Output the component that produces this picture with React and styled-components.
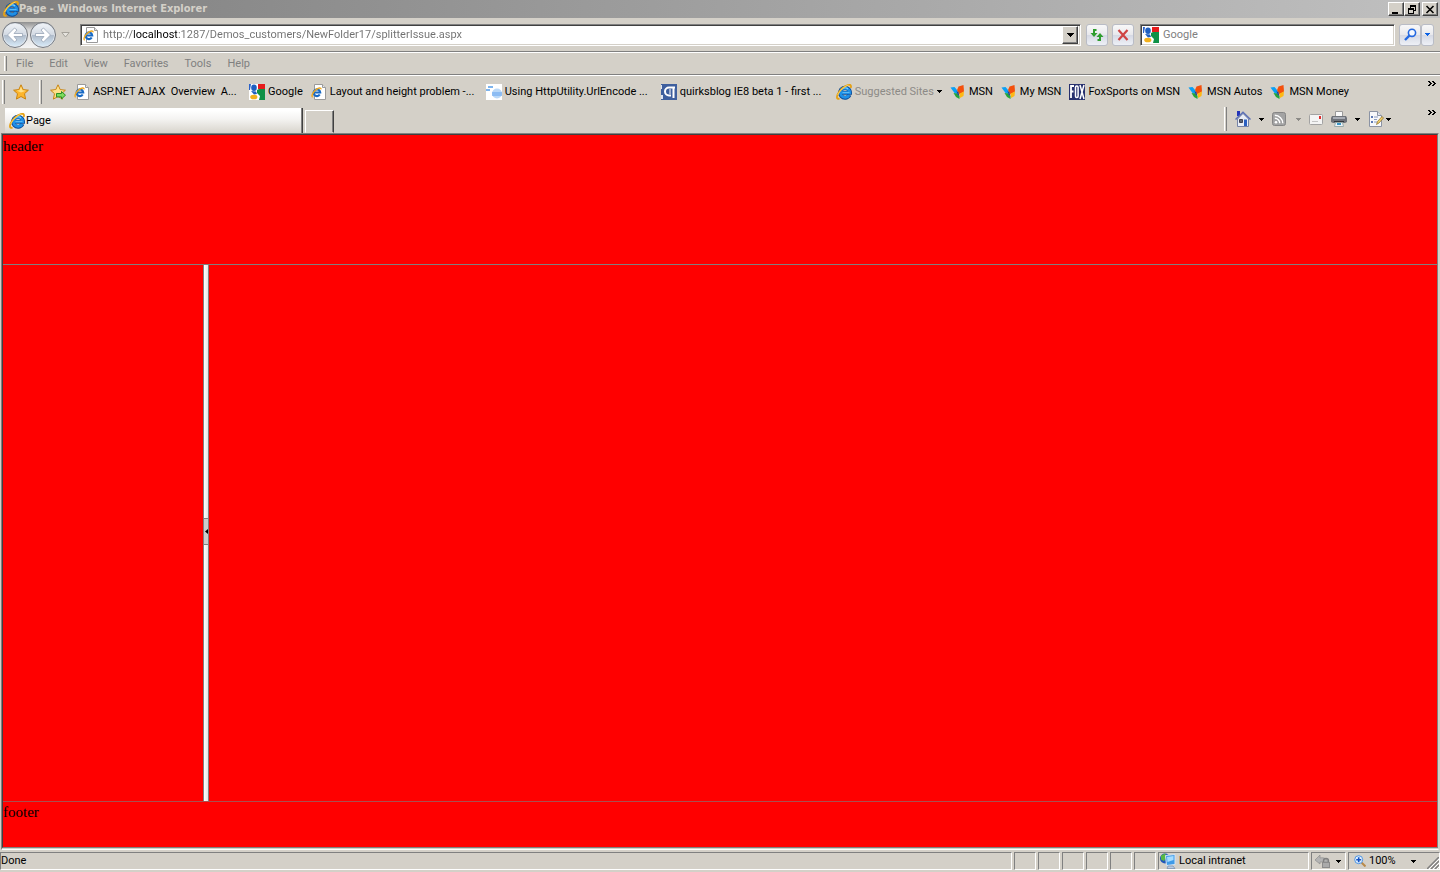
import React from 'react';
import styled, { createGlobalStyle, css } from 'styled-components';

const GlobalStyle = createGlobalStyle`
  body {
    margin: 0;
    background: #d4d0c8;
  }
  * {
    box-sizing: border-box;
  }
  button {
    font: inherit;
    color: inherit;
    padding: 0;
    margin: 0;
    border: 0;
    background: none;
  }
  svg {
    display: block;
    flex: none;
  }
`;

const Window = styled.div`
  min-height: 100vh;
  display: flex;
  flex-flow: column nowrap;
  background: #d4d0c8;
  color: #000;
  font-family: Roboto, 'Liberation Sans', sans-serif;
  font-size: 11px;
  line-height: 16px;
  white-space: nowrap;
`;

const TitleBar = styled.header`
  height: 18px;
  display: flex;
  align-items: center;
  padding: 0 2px 0 3px;
  background: linear-gradient(to right, #808080, #c0c0c0);
  color: #d4d0c8;
`;

const Title = styled.h1`
  flex: 1;
  margin: 0;
  font-family: 'DejaVu Sans Condensed', 'Noto Sans', sans-serif;
  font-size: 11px;
  font-weight: 700;
`;

const WindowButtons = styled.div`
  display: flex;
  color: #000;
`;

const raised = css`
  background: #d4d0c8;
  border: 1px solid;
  border-color: #fff #404040 #404040 #fff;
  box-shadow: inset -1px -1px 0 #808080;
`;

const WindowButton = styled.button`
  ${raised}
  width: 16px;
  height: 14px;
  display: flex;
  align-items: center;
  justify-content: center;
  &:last-child {
    margin-left: 2px;
  }
`;

const AddressRow = styled.div`
  height: 34px;
  display: flex;
  align-items: center;
  padding: 0 6px 0 2px;
  border-bottom: 1px solid #808080;
`;

const NavGroup = styled.div`
  height: 26px;
  display: flex;
  gap: 2px;
  border-radius: 13px;
  background: linear-gradient(#8f8f8f, #d8d8d8 30%, #f4f4f4);
`;

const NavButton = styled.button`
  width: 26px;
  height: 26px;
  display: flex;
  align-items: center;
  justify-content: center;
  border: 1px solid #74787f;
  border-radius: 50%;
  background: linear-gradient(#f2f5f9 0%, #d3dae3 48%, #b0bccb 52%, #d9ecfa 100%);
  box-shadow: inset 0 0 0 1px #dfe5ec;
`;

const HistoryButton = styled.button`
  width: 24px;
  display: flex;
  justify-content: center;
  padding-right: 6px;
`;

const sunken = css`
  background: #fff;
  border: 1px solid;
  border-color: #808080 #fff #fff #808080;
  box-shadow: inset 1px 1px 0 #404040, inset -1px -1px 0 #d4d0c8;
`;

const Field = styled.form`
  ${sunken}
  height: 22px;
  display: flex;
  align-items: center;
  padding: 2px;
  width: ${props => props.$width || 'auto'};
  flex: ${props => (props.$width ? 'none' : 1)};
  margin-left: ${props => (props.$width ? '6px' : '0')};
`;

const TextInput = styled.input`
  flex: 1;
  min-width: 0;
  height: 18px;
  padding: 0;
  margin-left: 4px;
  border: 0;
  outline: 0;
  background: transparent;
  color: #808080;
  font: inherit;
  &::placeholder {
    color: #808080;
    opacity: 1;
  }
`;

/* the host part of the url is darker than the rest */
const UrlInput = styled(TextInput)`
  background: linear-gradient(to right, #707070 31px, #000 31px, #000 74px, #707070 74px);
  -webkit-background-clip: text;
  background-clip: text;
  -webkit-text-fill-color: transparent;
`;

const DropButton = styled.button`
  ${raised}
  width: 16px;
  height: 18px;
  display: flex;
  align-items: center;
  justify-content: center;
`;

const ToolButton = styled.button`
  width: ${props => (props.$narrow ? '13px' : '22px')};
  height: 22px;
  display: flex;
  align-items: center;
  justify-content: center;
  margin-left: ${props => props.$gap || '0'};
  border: 1px solid #b9bcc6;
  border-radius: 3px;
  background: linear-gradient(#f8f8f8, #e8e8ec 50%, #d6d9e4 52%, #eef0f6);
`;

const MenuBar = styled.nav`
  height: 23px;
  display: flex;
  align-items: center;
  gap: 16px;
  padding-left: 4px;
  border-top: 1px solid #fff;
  border-bottom: 1px solid #808080;
  color: #808080;
`;

const Grip = styled.span`
  flex: none;
  width: 3px;
  height: ${props => props.$height || '24px'};
  border-left: 1px solid #fff;
  border-right: 1px solid #808080;
`;

const MenuGrip = styled(Grip)`
  margin-right: -7px;
`;

const FavoritesBar = styled.div`
  height: 32px;
  display: flex;
  align-items: center;
  padding: 0 4px 0 2px;
  border-top: 1px solid #fff;
`;

const IconButton = styled.button`
  display: flex;
  margin: 0 ${props => props.$right || '8px'} 0 8px;
`;

const Bookmarks = styled.nav`
  flex: 1;
  display: flex;
  align-items: center;
`;

const Bookmark = styled.a`
  flex: none;
  display: flex;
  align-items: center;
  gap: 3px;
  width: ${props => (props.$long ? '175px' : 'auto')};
  padding-right: ${props => (props.$long ? '0' : '8px')};
  color: ${props => (props.$muted ? '#8c8a86' : '#000')};
  text-decoration: none;
`;

const Chevron = styled.button`
  align-self: flex-start;
  padding-top: 5px;
`;

const TabRow = styled.div`
  height: 26px;
  display: flex;
  align-items: flex-end;
  padding: 0 4px 0 5px;
`;

const Tab = styled.button`
  width: 298px;
  height: 25px;
  display: flex;
  align-items: center;
  gap: 1px;
  padding-left: 4px;
  border-right: 1px solid #404040;
  box-shadow: inset -1px 0 0 #808080;
  background: linear-gradient(#fff 10%, #f4f3f1 45%, #d8d4cc);
`;

const NewTab = styled.button`
  width: 29px;
  height: 23px;
  margin-left: 2px;
  border: 1px solid;
  border-color: #fff #404040 transparent #fff;
  box-shadow: inset -1px 0 0 #808080;
`;

const Commands = styled.div`
  align-self: flex-start;
  display: flex;
  align-items: center;
  margin-left: auto;
`;

const Command = styled.button`
  height: 16px;
  display: flex;
  align-items: center;
  gap: ${props => props.$gap || '8px'};
  margin-left: 8px;
`;

const CommandChevron = styled(Chevron)`
  padding-top: 3px;
  margin-left: 37px;
`;

const Viewport = styled.main`
  flex: 1;
  display: flex;
  flex-flow: column nowrap;
  margin: 0 1px 0 1px;
  border-top: 1px solid #808080;
  border-left: 1px solid #808080;
  border-right: 1px solid #d4d0c8;
  border-bottom: 1px solid #fff;
  font-family: 'Liberation Serif', serif;
  font-size: 15px;
  line-height: 19px;
`;

const Page = styled.div`
  flex: 1;
  display: flex;
  flex-flow: column nowrap;
  background: #f00;
  border: 1px solid;
  border-color: #404040 #808080 #808080 #404040;
  margin-bottom: 1px;
`;

const PageHeader = styled.div`
  height: 130px;
  padding-top: 2px;
  border-bottom: 1px solid #808080;
`;

const Splitter = styled.div`
  flex: 1;
  display: flex;
`;

const LeftPane = styled.div`
  width: 200px;
`;

const SplitBar = styled.div`
  width: 6px;
  display: flex;
  align-items: center;
  padding-bottom: 4px;
  border-left: 1px solid #808080;
  border-right: 1px solid #808080;
  background: linear-gradient(to right, #fff, #e4e4e4);
`;

const Collapse = styled.button`
  width: 4px;
  height: 27px;
  display: flex;
  align-items: center;
  justify-content: flex-end;
  border-top: 1px solid #808080;
  border-bottom: 1px solid #808080;
  background: #ccc;
`;

const PageFooter = styled.div`
  height: 46px;
  border-top: 1px solid #a85050;
  padding-top: 1px;
`;

const StatusBar = styled.footer`
  height: 22px;
  display: flex;
  gap: 2px;
  padding: 2px 0;
`;

const Pane = styled.div`
  width: ${props => props.$width || 'auto'};
  flex: ${props => (props.$width ? 'none' : 1)};
  display: flex;
  align-items: center;
  gap: 3px;
  padding-left: ${props => (props.$pad ? '1px' : '0')};
  border: 1px solid;
  border-color: #808080 #fff #fff #808080;
`;

const PaneButton = styled.button`
  display: flex;
  align-items: center;
  gap: ${props => props.$gap || '5px'};
  padding-left: ${props => props.$left || '3px'};
`;

const ResizeGrip = styled.span`
  align-self: flex-end;
  margin-left: auto;
`;

const Ie = () => (
  <svg width="16" height="16" viewBox="0 0 16 16">
    <path d="M13.5 11A5 5 0 1 1 14 8.700H5.5" fill="none" stroke="#0a4a97" strokeWidth="4" />
    <path d="M13.2 11A4.700 4.700 0 1 1 13.800 8.600H5.5" fill="none" stroke="#1f8fe6" strokeWidth="2.800" />
    <path d="M5.2 5.6a4.6 4.6 0 0 1 6.800-.6" fill="none" stroke="#7fd4ff" strokeWidth="1.200" />
    <path d="M6.5 8.500h7" stroke="#6cc6fa" strokeWidth=".8" />
    <path d="M3.500 14.400C1.200 15.600.3 14 1.500 10.700 3.200 6.500 8 1.900 12.300.900 14.900.400 15.500 1.700 14.700 4" fill="none" stroke="#e5a114" strokeWidth="1.800" />
    <path d="M1.800 11C3.800 6.500 8.300 2.300 12.500 1.100" fill="none" stroke="#ffe27a" strokeWidth=".8" />
  </svg>
);

const PageIe = () => (
  <svg width="16" height="16" viewBox="0 0 16 16">
    <path d="M3.500.500h8l3 3v12h-11z" fill="#fff" stroke="#9a9a9a" />
    <path d="M11.500.500v3h3" fill="#e4e4e4" stroke="#9a9a9a" />
    <path d="M8.700 10.500A3.300 3.300 0 1 1 9.200 8.500H3.500" fill="none" stroke="#1769c4" strokeWidth="2.200" />
    <path d="M1.700 13C.200 12.500 1.300 9 4.300 6.300 7.300 3.500 10.500 3.200 9.900 5.400" fill="none" stroke="#f0a91f" strokeWidth="1.400" />
  </svg>
);

const GoogleIcon = () => (
  <svg width="16" height="16" viewBox="0 0 16 16">
    <path fill="#fff" d="M0 0h16v16H0z" />
    <path d="M9 0h7v5H9z" fill="#e61c1c" />
    <path d="M8 6l2-1h6v11h-6l1-4-3-3z" fill="#0f9146" />
    <path d="M0 0h2l-1 6H0z" fill="#2b62c9" />
    <ellipse cx="5" cy="3.800" rx="2.800" ry="3.200" fill="#1f5fc0" />
    <path d="M2 7l5 .500 1 2.500-3 .500z" fill="#1f5fc0" />
    <ellipse cx="4.800" cy="13" rx="3.600" ry="2.300" fill="#f3b01c" />
  </svg>
);

const Msn = () => (
  <svg width="16" height="16" viewBox="0 0 16 16">
    <path d="M.500 3.500L4.500 3l3 3.500v4L4.500 9z" fill="#0aa0f5" />
    <path d="M7 6l1.500-3.500L13.500 1l.500 6.500-4.500 3z" fill="#f4500c" />
    <path d="M9.500 9.500L14 7.500 13.500 12l-3.500 2z" fill="#fdb813" />
    <path d="M3.500 9l3.500.500 2.500 2.500v3L6 13z" fill="#23a638" />
    <path d="M6.500 7l2 1 .700 4-1.700-1.500z" fill="#27408f" />
  </svg>
);

const LinkIcon = () => (
  <svg width="16" height="16" viewBox="0 0 16 16">
    <path fill="#fff" d="M0 0h16v16H0z" />
    <path d="M2 2h5v2H2zM0 5h4v2H0z" fill="#7db4ee" />
    <circle cx="11" cy="9.500" r="5" fill="#b9d8f8" />
    <path d="M6 8h10v4H6z" fill="#6eaaf0" opacity=".6" />
  </svg>
);

const Quirks = () => (
  <svg width="16" height="16" viewBox="0 0 16 16">
    <path fill="#3e5f9e" d="M0 0h16v16H0z" />
    <path d="M0 1h1v4H0zM0 11h2v4H0z" fill="#dfe6f2" />
    <path d="M14 3.500H8a4 4 0 0 0 0 8h2M12.500 3v11" fill="none" stroke="#fff" strokeWidth="2" />
    <path d="M9 5v5" stroke="#fff" />
  </svg>
);

const Fox = () => (
  <svg width="16" height="16" viewBox="0 0 16 16">
    <path fill="#27306e" d="M0 0h16v16H0z" />
    <path d="M2 14V2h3M2 7.500h2.500" fill="none" stroke="#fff" strokeWidth="1.800" />
    <rect x="6.500" y="2" width="2.600" height="11.500" rx="1.200" fill="none" stroke="#fff" strokeWidth="1.500" />
    <path d="M11 1l4 14M15 1l-4 14" stroke="#fff" strokeWidth="1.500" />
  </svg>
);

const Star = ({ add }) => (
  <svg width="16" height="16" viewBox="0 0 16 16">
    <path
      d="M8 .800l2.200 4.800 5.200.600-3.900 3.500 1.100 5.400L8 12.500l-4.600 2.600 1.100-5.400L.600 6.200l5.200-.600z"
      fill={add ? '#fbe08a' : '#fdb52b'}
      stroke="#c98411"
      strokeLinejoin="round"
    />
    <path d="M8 2.600l1.500 3.700 3.500.400-5 1.800-4.500-2 3-.200z" fill="#ffe08a" />
    {add && <path d="M6.500 9.500h5v-2l4 3.700-4 3.700v-2h-5z" fill="#7ddc5c" stroke="#2b8f22" />}
  </svg>
);

const Arrow = ({ color = '#000' }) => (
  <svg width="5" height="3" viewBox="0 0 5 3" shapeRendering="crispEdges">
    <path d="M0 0h5v1H4v1H3v1H2V2H1V1H0z" fill={color} />
  </svg>
);

const BigArrow = ({ color = '#000' }) => (
  <svg width="7" height="4" viewBox="0 0 7 4" shapeRendering="crispEdges">
    <path d="M0 0h7v1H6v1H5v1H4v1H3V3H2V2H1V1H0z" fill={color} />
  </svg>
);

const More = () => (
  <svg width="8" height="5" viewBox="0 0 8 5" shapeRendering="crispEdges">
    <path d="M0 0h2v1h1v1h1v1H3v1H2v1H0V4h1V3h1V2H1V1H0zM4 0h2v1h1v1h1v1H7v1H6v1H4V4h1V3h1V2H5V1H4z" />
  </svg>
);

const NavArrow = ({ flip }) => (
  <svg width="18" height="16" viewBox="0 0 18 16">
    <path
      d={flip ? 'M1.500 6.500H10L7 3l2.500-2 7 7-7 7L7 13l3-3.500H1.500z' : 'M16.500 6.500H8L11 3 8.500 1l-7 7 7 7L11 13 8 9.500h8.500z'}
      fill="#fff"
      stroke="#98a5b6"
      strokeWidth=".8"
    />
  </svg>
);

const Home = () => (
  <svg width="16" height="16" viewBox="0 0 16 16">
    <path d="M2 0h3v5H2z" fill="#2434b8" />
    <path d="M2.500 8L8 2.500l5.500 5.500v7.500h-11z" fill="#e8edf6" stroke="#7683a6" />
    <path d="M.500 8.500L8 1.200l7.500 7.300" fill="none" stroke="#5b6fb5" strokeWidth="1.500" />
    <path d="M4.500 8.500h3v3h-3z" fill="#5c6675" stroke="#445" />
    <path d="M9 8.500h3v6.500H9z" fill="#2a5fc0" />
  </svg>
);

const Rss = () => (
  <svg width="14" height="14" viewBox="0 0 14 14">
    <rect x=".5" y=".5" width="13" height="13" rx="2" fill="#a3a3a3" stroke="#858585" />
    <circle cx="4" cy="10.200" r="1.300" fill="#fff" />
    <path d="M2.800 6.300a5 5 0 0 1 5 5M2.800 3.300a8 8 0 0 1 8 8" fill="none" stroke="#fff" strokeWidth="1.400" />
  </svg>
);

const Mail = () => (
  <svg width="14" height="11" viewBox="0 0 14 11">
    <rect x=".5" y=".5" width="13" height="10" rx="1" fill="#f4f4f4" stroke="#a2a2a2" />
    <path d="M10 2h2v3h-2z" fill="#e02b2b" />
    <path d="M3 7.500h6" stroke="#c4c4c4" />
  </svg>
);

const Printer = () => (
  <svg width="16" height="16" viewBox="0 0 16 16">
    <path d="M4.500.500h7v6h-7z" fill="#fafafa" stroke="#9a9a9a" />
    <path d="M1 5h14l1 2v4l-2 1H2l-2-1V7z" fill="#6f737a" />
    <path d="M2 6h12v2H2z" fill="#a8acb4" />
    <path d="M3 10h10v1H3z" fill="#33363c" />
    <path d="M4.500 11.500h7l1 4h-9z" fill="#e9f3fa" stroke="#9aa" />
    <path d="M6 12h4v2H6z" fill="#3b95c4" />
  </svg>
);

const PageMenu = () => (
  <svg width="16" height="16" viewBox="0 0 16 16">
    <path d="M1.500.500h8l4 4v11h-12z" fill="#f7f8fb" stroke="#8b93a4" />
    <path d="M9.500.500v4h4" fill="#dfe4ee" stroke="#8b93a4" />
    <path d="M3 5h2v2H3zM3 10h2v2H3z" fill="#5c79b5" />
    <path d="M6 6h4M6 8.500h3M6 11h3" stroke="#8b9cc0" />
    <path d="M8.500 13.500l1-3L14 5.500l1.500 1.500-4.500 5z" fill="#f0cf6a" stroke="#8a6a25" strokeWidth=".7" />
  </svg>
);

const Intranet = () => (
  <svg width="16" height="16" viewBox="0 0 16 16">
    <circle cx="5" cy="5.500" r="5" fill="#1f57b8" />
    <path d="M1 2.500l4-2 2 3-3 4.500-3-1.500z" fill="#56b844" />
    <path d="M5.500 2.500l9.500-1v10l-8.500 1z" fill="#3f9be8" stroke="#d5e3f2" />
    <path d="M7 4l6.500-1v4L7.500 9z" fill="#a5dcff" />
    <path d="M8 13h5l2 2.500H7z" fill="#b9cbe0" stroke="#6782a8" strokeWidth=".6" />
  </svg>
);

const Lock = () => (
  <svg width="16" height="16" viewBox="0 0 16 16">
    <path d="M0 7l5-5v3c4-1 7 1 8 4H5v2z" fill="#b4b4b4" stroke="#8e8e8e" strokeWidth=".7" />
    <path d="M8.500 10V8a2.500 2.500 0 0 1 5 0v2" fill="none" stroke="#808080" strokeWidth="1.400" />
    <path d="M7 9h8v6H7z" fill="#8b8b8b" />
    <path d="M8 11h6M8 13h6" stroke="#c9c9c9" />
  </svg>
);

const ZoomIcon = () => (
  <svg width="12" height="12" viewBox="0 0 12 12">
    <path d="M7.500 7.500l4 4" stroke="#b98a4a" strokeWidth="2" />
    <circle cx="4.700" cy="4.700" r="4" fill="#dff0ff" stroke="#4f94e0" />
    <path d="M4.700 2.200v5M2.200 4.700h5" stroke="#1553c4" strokeWidth="1.600" />
  </svg>
);

const bookmarks = [
  { label: 'ASP.NET AJAX\u00a0 Overview\u00a0 A...', icon: PageIe, long: true },
  { label: 'Google', icon: GoogleIcon },
  { label: 'Layout and height problem -...', icon: PageIe, long: true },
  { label: 'Using HttpUtility.UrlEncode ...', icon: LinkIcon, long: true },
  { label: 'quirksblog IE8 beta 1 - first ...', icon: Quirks, long: true },
  { label: 'Suggested Sites', icon: Ie, muted: true, menu: true },
  { label: 'MSN', icon: Msn },
  { label: 'My MSN', icon: Msn },
  { label: 'FoxSports on MSN', icon: Fox },
  { label: 'MSN Autos', icon: Msn },
  { label: 'MSN Money', icon: Msn },
];

const menus = ['File', 'Edit', 'View', 'Favorites', 'Tools', 'Help'];

const App = () => {
  return (
    <>
      <GlobalStyle />
      <Window>
        <TitleBar>
          <Ie />
          <Title>Page - Windows Internet Explorer</Title>
          <WindowButtons>
            <WindowButton aria-label="Minimize">
              <svg width="10" height="9" viewBox="0 0 10 9"><path d="M1 7h6v2H1z" /></svg>
            </WindowButton>
            <WindowButton aria-label="Restore">
              <svg width="10" height="9" viewBox="0 0 10 9" shapeRendering="crispEdges">
                <path d="M3 0h6v6H7V5h1V2H4v1H3zM1 3h6v6H1zM2 5v3h4V5z" fillRule="evenodd" />
              </svg>
            </WindowButton>
            <WindowButton aria-label="Close">
              <svg width="10" height="9" viewBox="0 0 10 9"><path d="M1.500 1l7 7M8.500 1l-7 7" stroke="#000" strokeWidth="1.600" /></svg>
            </WindowButton>
          </WindowButtons>
        </TitleBar>

        <AddressRow>
          <NavGroup>
            <NavButton aria-label="Back"><NavArrow /></NavButton>
            <NavButton aria-label="Forward"><NavArrow flip /></NavButton>
          </NavGroup>
          <HistoryButton aria-label="Recent pages">
            <svg width="9" height="6" viewBox="0 0 9 6"><path d="M.8.500h7.400L4.500 5z" fill="#e6e4df" stroke="#a5a29b" /></svg>
          </HistoryButton>
          <Field>
            <PageIe />
            <UrlInput aria-label="Address" defaultValue="http://localhost:1287/Demos_customers/NewFolder17/splitterIssue.aspx" />
            <DropButton type="button" aria-label="Show addresses"><BigArrow /></DropButton>
          </Field>
          <ToolButton aria-label="Refresh" $gap="5px">
            <svg width="14" height="14" viewBox="0 0 14 14">
              <path d="M6.500 2H4v4" fill="none" stroke="#2f9e2f" strokeWidth="2" />
              <path d="M.500 5h7L4 9z" fill="#2f9e2f" />
              <path d="M7.500 12H10V8" fill="none" stroke="#2f9e2f" strokeWidth="2" />
              <path d="M6.500 9h7L10 5z" fill="#2f9e2f" />
            </svg>
          </ToolButton>
          <ToolButton aria-label="Stop" $gap="4px">
            <svg width="12" height="12" viewBox="0 0 12 12"><path d="M1.500 1l9 10M10.500 1l-9 10" stroke="#cf4444" strokeWidth="2.200" /></svg>
          </ToolButton>
          <Field $width="255px">
            <GoogleIcon />
            <TextInput aria-label="Search" placeholder="Google" />
          </Field>
          <ToolButton aria-label="Search" $gap="4px">
            <svg width="13" height="13" viewBox="0 0 13 13">
              <path d="M1 12l5-5" stroke="#2368e0" strokeWidth="2.400" />
              <circle cx="8" cy="4.800" r="3.600" fill="#f4f8ff" stroke="#2368e0" strokeWidth="1.600" />
            </svg>
          </ToolButton>
          <ToolButton aria-label="Search options" $narrow><Arrow color="#0b62e6" /></ToolButton>
        </AddressRow>

        <MenuBar>
          <MenuGrip $height="15px" />
          {menus.map(menu => <button key={menu}>{menu}</button>)}
        </MenuBar>

        <FavoritesBar>
          <Grip />
          <IconButton aria-label="Favorites" $right="10px"><Star /></IconButton>
          <Grip />
          <IconButton aria-label="Add to favorites bar"><Star add /></IconButton>
          <Bookmarks>
            {bookmarks.map(({ label, icon: Icon, long, muted, menu }) => (
              <Bookmark key={label} href="#" $long={long} $muted={muted}>
                <Icon />
                <span>{label}</span>
                {menu && <Arrow />}
              </Bookmark>
            ))}
          </Bookmarks>
          <Chevron aria-label="More favorites"><More /></Chevron>
        </FavoritesBar>

        <TabRow>
          <Tab><Ie />Page</Tab>
          <NewTab aria-label="New tab" />
          <Commands>
            <Grip />
            <Command aria-label="Home"><Home /><Arrow /></Command>
            <Command aria-label="Feeds" $gap="10px"><Rss /><Arrow color="#8c8a86" /></Command>
            <Command aria-label="Read mail"><Mail /></Command>
            <Command aria-label="Print"><Printer /><Arrow /></Command>
            <Command aria-label="Page menu" $gap="2px"><PageMenu /><Arrow /></Command>
          </Commands>
          <CommandChevron aria-label="More commands"><More /></CommandChevron>
        </TabRow>

        <Viewport>
          <Page>
            <PageHeader>header</PageHeader>
            <Splitter>
              <LeftPane />
              <SplitBar>
                <Collapse aria-label="Collapse left pane">
                  <svg width="3" height="5" viewBox="0 0 3 5"><path d="M3 0v5L0 2.500z" /></svg>
                </Collapse>
              </SplitBar>
            </Splitter>
            <PageFooter>footer</PageFooter>
          </Page>
        </Viewport>

        <StatusBar>
          <Pane>Done</Pane>
          {[1, 2, 3, 4, 5, 6].map(n => <Pane key={n} $width="22px" />)}
          <Pane $width="151px" $pad><Intranet />Local intranet</Pane>
          <Pane $width="35px">
            <PaneButton aria-label="Protected mode"><Lock /><Arrow /></PaneButton>
          </Pane>
          <Pane $width="92px">
            <PaneButton $gap="3px" $left="5px"><ZoomIcon />100%</PaneButton>
            <PaneButton aria-label="Zoom level" $left="12px"><Arrow /></PaneButton>
            <ResizeGrip>
              <svg width="12" height="12" viewBox="0 0 12 12">
                <path d="M0 12L12 0M4 12l8-8M8 12l4-4" stroke="#808080" strokeWidth="1.500" />
                <path d="M2 12L12 2M6 12l6-6M10 12l2-2" stroke="#fff" />
              </svg>
            </ResizeGrip>
          </Pane>
        </StatusBar>
      </Window>
    </>
  );
};

export default App;
